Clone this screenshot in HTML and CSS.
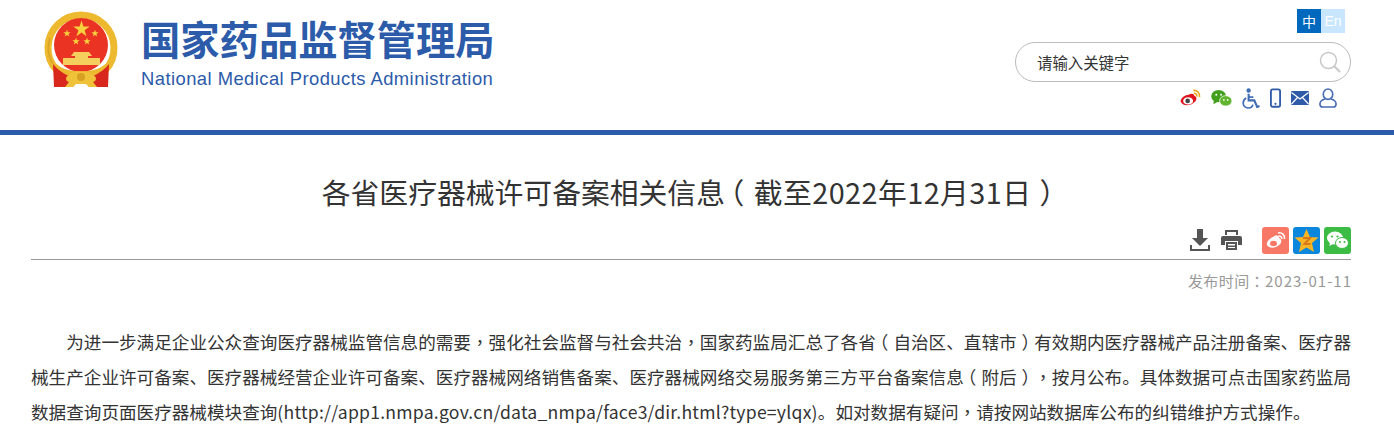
FILE: index.html
```html
<!DOCTYPE html>
<html lang="zh-CN">
<head>
  <meta charset="UTF-8">
  <title>各省医疗器械许可备案相关信息（截至2022年12月31日）</title>
  <link rel="stylesheet" href="styles.css">
</head>
<body>
  <header class="header">
    <div class="brand">
      <svg class="emblem" viewBox="0 0 76 78" width="76" height="78">
        <path d="M13.500 59 A33 33 0 1 1 62.500 59" fill="none" stroke="#edb92e" stroke-width="7"/>
        <path d="M12 56 A32 32 0 0 1 7 27" fill="none" stroke="#d9a326" stroke-width="1.500"/>
        <circle cx="38" cy="34" r="27" fill="#ea3323"/>
        <polygon fill="#f7d23e" points="38.500,9.500 40.400,15.500 46.700,15.500 41.600,19.200 43.500,25.200 38.500,21.500 33.500,25.200 35.400,19.200 30.300,15.500 36.600,15.500"/>
        <polygon fill="#f7d23e" points="24,18.500 24.900,21.200 27.700,21.200 25.400,22.900 26.300,25.600 24,24 21.700,25.600 22.600,22.900 20.300,21.200 23.100,21.200"/>
        <polygon fill="#f7d23e" points="52,18.500 52.900,21.200 55.700,21.200 53.400,22.900 54.300,25.600 52,24 49.700,25.600 50.600,22.900 48.300,21.200 51.100,21.200"/>
        <polygon fill="#f7d23e" points="33,26.500 33.900,29.200 36.700,29.200 34.400,30.900 35.300,33.600 33,32 30.700,33.600 31.600,30.900 29.300,29.200 32.100,29.200"/>
        <polygon fill="#f7d23e" points="44,26.500 44.900,29.200 47.700,29.200 45.400,30.900 46.300,33.600 44,32 41.700,33.600 42.600,30.900 40.300,29.200 43.100,29.200"/>
        <path d="M31 41 H46 L49 45 H45 V47 H57 V54 H20 V47 H32 V45 H28 Z" fill="#f5cf5e"/>
        <path d="M11 50 C20 64 56 64 65 50 L68 55 C58 70 18 70 8 55 Z" fill="#edb92e"/>
        <path d="M10 53 C18 63 28 66 34 68 L30 76 H11 Z M66 53 C58 63 48 66 42 68 L46 76 H65 Z" fill="#d8281e"/>
        <path d="M26 64 C30 59 46 59 50 64 C54 66 54 70 50 71 L54 76 H46 L43 73 H33 L30 76 H22 L26 71 C22 70 22 66 26 64 Z" fill="#f0c23a"/>
        <circle cx="38" cy="66" r="4" fill="#d8a023"/>
      </svg>
      <div class="brand-text">
        <div class="brand-cn">国家药品监督管理局</div>
        <div class="brand-en">National Medical Products Administration</div>
      </div>
    </div>
    <div class="tools">
      <div class="lang"><span class="lang-cn">中</span><span class="lang-en">En</span></div>
      <div class="search">
        <span class="search-text">请输入关键字</span>
        <svg viewBox="0 0 22 22" width="22" height="22" fill="none" stroke="#c8c8c8">
          <circle cx="9.500" cy="9.500" r="8" stroke-width="1.500"/>
          <path d="M15 15 L21 21" stroke-width="2"/>
        </svg>
      </div>
      <div class="quick">
        <svg viewBox="0 0 22 20" width="21" height="19">
          <path d="M9 6 C12 4 15 5 15 7 C18 8 18 12 15 14 C11 18 3 18 1 14 C-1 11 5 6 9 6 Z" fill="#e0141c"/>
          <ellipse cx="8.500" cy="12.500" rx="5.200" ry="3.800" fill="#fff"/>
          <circle cx="8" cy="12.500" r="2.400" fill="#444"/>
          <path d="M14 1.500 C18 1 21 4 20.500 8.500 M14.500 4.500 C16.500 4.300 18 6 17.700 8" fill="none" stroke="#eba81e" stroke-width="1.700"/>
        </svg>
        <svg viewBox="0 0 22 20" width="21" height="19">
          <ellipse cx="8" cy="7.500" rx="7.800" ry="6.500" fill="#43a01f"/>
          <path d="M3 11 L2.500 16 L8 13 Z" fill="#43a01f"/>
          <ellipse cx="15.500" cy="12.500" rx="6.500" ry="5.500" fill="#5fb52e" stroke="#fff" stroke-width=".8"/>
          <circle cx="5.500" cy="6" r="1" fill="#fff"/>
          <circle cx="10.500" cy="6" r="1" fill="#fff"/>
          <circle cx="13.500" cy="11.500" r=".9" fill="#fff"/>
          <circle cx="17.500" cy="11.500" r=".9" fill="#fff"/>
        </svg>
        <svg viewBox="0 0 19 22" width="18" height="21" fill="none" stroke="#3e6db5">
          <circle cx="7" cy="2.500" r="2.300" fill="#3e6db5" stroke="none"/>
          <path d="M7 6 V13 H13 L16 20 L18.500 19" stroke-width="2.200"/>
          <path d="M7 9.500 H12" stroke-width="1.800"/>
          <path d="M4.500 10.500 C0 13 0 20 6 21 C9 21.300 11 19.500 11.500 17.500" stroke-width="1.800"/>
        </svg>
        <svg viewBox="0 0 12 21" width="11" height="20">
          <rect x="1" y="1" width="10" height="19" rx="2" fill="none" stroke="#2f5ba8" stroke-width="2"/>
          <circle cx="6" cy="16.800" r="1.200" fill="#2f5ba8"/>
        </svg>
        <svg viewBox="0 0 18 14" width="18" height="14">
          <rect width="18" height="14" rx="1" fill="#2f5ba8"/>
          <path d="M0.500 1.500 L9 8 L17.500 1.500 M0.500 13 L6.500 6.500 M17.500 13 L11.500 6.500" fill="none" stroke="#fff" stroke-width="1.200"/>
        </svg>
        <svg viewBox="0 0 19 21" width="18" height="20" fill="none" stroke="#4a6db5" stroke-width="1.700">
          <ellipse cx="9.500" cy="6.500" rx="5" ry="5.500"/>
          <path d="M6.500 11.500 C2 12.500 1 15 1 17 C1 19 2 20 4 20 H15 C17 20 18 19 18 17 C18 15 17 12.500 12.500 11.500"/>
        </svg>
      </div>
    </div>
  </header>

  <main class="article">
    <h1 class="title">各省医疗器械许可备案相关信息<span class="lp title-lp">（</span><span class="title-date">截至2022年12月31日</span><span class="rp">）</span></h1>
    <div class="actions">
      <svg viewBox="0 0 20 22" width="20" height="22" fill="#555">
        <path d="M7 0 H13 V9 H18 L10 17 L2 9 H7 Z"/>
        <path d="M0 16 H2 V20 H18 V16 H20 V22 H0 Z"/>
      </svg>
      <svg class="print" viewBox="0 0 21 20" width="21" height="20" fill="#555">
        <path d="M4 0 H17 V5 H15 V2 H6 V5 H4 Z"/>
        <path d="M2 6 H19 Q21 6 21 8 V15 H17 V11 H4 V15 H0 V8 Q0 6 2 6 Z"/>
        <path d="M5 12 H16 V20 H5 Z M7 14 V15.500 H14 V14 Z M7 17 V18 H14 V17 Z" fill-rule="evenodd"/>
      </svg>
      <div class="shares">
        <svg class="share" viewBox="0 0 27 27" width="27" height="27">
          <rect width="27" height="27" rx="3" fill="#f87868"/>
          <path d="M11 10 C14 8 17 8 17 11 C20 12 20 16 17 18 C13 22 6 21 5 18 C4 15 8 11 11 10 Z" fill="#fff"/>
          <ellipse cx="11.500" cy="16.500" rx="3.500" ry="2.800" fill="#f87868"/>
          <path d="M16 6 C20 5 23 8 22.500 12 M16.500 9 C18.500 8.800 20 10 19.800 12" fill="none" stroke="#fff" stroke-width="1.500"/>
        </svg>
        <svg class="share" viewBox="0 0 27 27" width="27" height="27">
          <rect width="27" height="27" rx="3" fill="#0a86dc"/>
          <polygon points="13.500,2 17,10 25.500,10.500 19,16 21,25 13.500,20.500 6,25 8,16 1.500,10.500 10,10" fill="#f7b524"/>
          <path d="M10 11 H17 L11.500 17 H17.500" fill="none" stroke="#d9781a" stroke-width="2"/>
        </svg>
        <svg class="share" viewBox="0 0 27 27" width="27" height="27">
          <rect width="27" height="27" rx="3" fill="#3cbc45"/>
          <ellipse cx="11" cy="11" rx="8" ry="6.500" fill="#fff"/>
          <path d="M6 15 L5.500 19 L11 16 Z" fill="#fff"/>
          <ellipse cx="18" cy="16" rx="6.500" ry="5.500" fill="#fff" stroke="#3cbc45"/>
          <circle cx="8" cy="9.500" r="1.100" fill="#3cbc45"/>
          <circle cx="13.500" cy="9.500" r="1.100" fill="#3cbc45"/>
          <circle cx="16" cy="15" r="1" fill="#3cbc45"/>
          <circle cx="20.500" cy="15" r="1" fill="#3cbc45"/>
        </svg>
      </div>
    </div>
    <div class="date">发布时间<span class="mid" lang="zh-TW">：</span><span class="date-num">2023-01-11</span></div>
    <p class="content">为进一步满足企业公众查询医疗器械监管信息的需要<span class="mid" lang="zh-TW">，</span>强化社会监督与社会共治<span class="mid" lang="zh-TW">，</span>国家药监局汇总了各省<span class="lp">（</span>自治区、直辖市<span class="rp">）</span>有效期内医疗器械产品注册备案、医疗器械生产企业许可备案、医疗器械经营企业许可备案、医疗器械网络销售备案、医疗器械网络交易服务第三方平台备案信息<span class="lp">（</span>附后<span class="rp">）</span><span class="mid" lang="zh-TW">，</span>按月公布。具体数据可点击国家药监局数据查询页面医疗器械模块查询<span class="url">(http://app1.nmpa.gov.cn/data_nmpa/face3/dir.html?type=ylqx)</span>。如对数据有疑问<span class="mid" lang="zh-TW">，</span>请按网站数据库公布的纠错维护方式操作。</p>
  </main>
</body>
</html>
```

FILE: styles.css
```css
body { margin: 0; background: #fff; font-family: "Noto Sans CJK SC", "Noto Sans", sans-serif; color: #333; height: 428px; overflow: hidden; }

.header { height: 130px; border-bottom: 5px solid #2c5ba9; display: flex; justify-content: space-between; padding: 0 43px 0 43px; }
.brand { display: flex; align-items: flex-start; padding-top: 11px; }
.emblem { display: block; }
.brand-text { margin-left: 22px; padding-top: 4px; }
.brand-cn { font-size: 39.300px; line-height: 46px; font-weight: 700; color: #2c5ba9; white-space: nowrap; }
.brand-en { font-family: "Liberation Sans", sans-serif; font-size: 18.400px; line-height: 22px; margin-top: 7px; letter-spacing: .45px; color: #2c5ba9; white-space: nowrap; }

.tools { width: 336px; display: flex; flex-direction: column; align-items: flex-end; }
.lang { display: flex; margin: 9px 6px 0 0; font-size: 14px; line-height: 24px; }
.lang-cn, .lang-en { width: 24px; text-align: center; color: #fff; }
.lang-cn { background: #0068bd; }
.lang-en { background: #c8e6ff; font-family: "Liberation Sans", sans-serif; }
.search { box-sizing: border-box; width: 336px; height: 40px; margin-top: 9px; border: 1px solid #bbb; border-radius: 20px; display: flex; align-items: center; justify-content: space-between; padding: 0 9px 0 21px; font-size: 15.400px; }
.search-text { color: #333; padding-bottom: 1px; }
.quick { display: flex; align-items: center; justify-content: flex-end; gap: 10px; margin: 5px 14px 0 0; height: 22px; }

.article { padding: 0 43px 0 31px; }
.title { margin: 0; padding-top: 36px; font-size: 28.800px; line-height: 42px; font-weight: 400; text-align: center; color: #333; }
.title-date { letter-spacing: .45px; }
.lp { font-feature-settings: "halt"; padding: 0 .28em 0 .22em; }
.title-lp { padding: 0 .33em 0 .17em; }
.rp { font-feature-settings: "halt"; padding: 0 .22em 0 .28em; }
.mid { font-family: "Noto Sans CJK TC", sans-serif; }
.actions { display: flex; justify-content: flex-end; align-items: center; margin-top: 8px; height: 38px; border-bottom: 1px solid #999; }
.print { margin-left: 11px; }
.shares { display: flex; gap: 4px; margin-left: 20px; }
.date { margin-top: 11px; text-align: right; font-size: 15px; line-height: 20px; color: #999; letter-spacing: .4px; }
.date-num { letter-spacing: 1px; margin-right: -1px; }
.content { margin: 33px 0 0; font-size: 17.600px; line-height: 35px; text-indent: 2em; text-align: justify; color: #333; }
.url { letter-spacing: .23px; }
```
